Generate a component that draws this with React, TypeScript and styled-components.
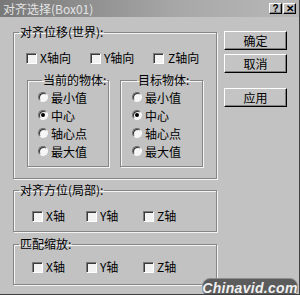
import React from 'react';
import styled, { createGlobalStyle } from 'styled-components';

const Global = createGlobalStyle`
  html, body { margin: 0; padding: 0; background: #c2c2c2; }
  body { font-family: "Noto Sans CJK SC", "Noto Sans", sans-serif; font-size: 12px; color: #000; }
`;

const Window = styled.div`
  position: relative;
  width: 300px;
  height: 295px;
  box-sizing: border-box;
  background: #c2c2c2;
  overflow: hidden;
  display: flex;
  flex-direction: column;
  border-right: 1px solid #404040;
  border-bottom: 1px solid #404040;
`;

const TitleBar = styled.div`
  height: 17px;
  display: flex;
  align-items: center;
  padding: 0 3px;
  background: linear-gradient(to right, #787878, #a8a8a8 60%, #b8b8b8);
  color: #e4e4e4;
  font-size: 12px;
  line-height: 14px;
`;

const Title = styled.span`
  flex: 1;
`;

const TitleBtns = styled.div`
  display: flex;
  gap: 1px;
`;

const TitleBtn = styled.div`
  width: 11px;
  height: 9px;
  background: #c4c4c4;
  border-style: solid;
  border-width: 1px;
  border-color: #fff #000 #000 #fff;
  box-shadow: inset -1px -1px #808080;
  display: flex;
  align-items: center;
  justify-content: center;
  font: bold 10px "Liberation Sans", sans-serif;
  color: #000;
`;

const Body = styled.div`
  display: flex;
  padding: 8px 0 0 13px;
  gap: 7px;
`;

const LeftCol = styled.div`
  width: 204px;
  display: flex;
  flex-direction: column;
`;

const RightCol = styled.div`
  width: 63px;
  display: flex;
  flex-direction: column;
  padding-top: 6px;
`;

const Button = styled.div<{ $mb: number }>`
  height: 19px;
  box-sizing: border-box;
  margin-bottom: ${(p) => p.$mb}px;
  display: flex;
  align-items: center;
  justify-content: center;
  background: #c4c4c4;
  border-style: solid;
  border-width: 1px;
  border-color: #fff #000 #000 #fff;
  box-shadow: inset -1px -1px #808080;
  font-size: 12px;
`;

const Group = styled.fieldset<{ $pt: number; $pb: number; $mt: number }>`
  margin: ${(p) => p.$mt}px 0 0 0;
  padding: ${(p) => p.$pt}px 0 ${(p) => p.$pb}px 0;
  border: 1px solid #868686;
  box-shadow: inset 1px 1px #f4f4f4, 1px 1px #f4f4f4;
  min-inline-size: 0;
  flex: none;
`;

const Legend = styled.legend<{ $ml: number }>`
  margin-left: ${(p) => p.$ml}px;
  padding: 0 1px;
  font-size: 12px;
  line-height: 14px;
  height: 14px;
`;

const CheckRow = styled.div<{ $pl: number; $cols: string }>`
  display: grid;
  grid-template-columns: ${(p) => p.$cols};
  padding-left: ${(p) => p.$pl}px;
  height: 14px;
  align-items: center;
`;

const Item = styled.div<{ $gap: number }>`
  display: flex;
  align-items: center;
  gap: ${(p) => p.$gap}px;
  white-space: nowrap;
  line-height: 14px;
`;

const Box = styled.span`
  width: 11px;
  height: 11px;
  box-sizing: border-box;
  background: #f2f2f2;
  border-style: solid;
  border-width: 1px;
  border-color: #7a7a7a #ffffff #ffffff #7a7a7a;
  box-shadow: inset 1px 1px #3a3a3a;
  flex: none;
`;

const SubRow = styled.div`
  display: flex;
  padding-left: 13px;
  gap: 11px;
  margin-top: 8px;
`;

const SubGroup = styled.fieldset<{ $w: number; $pl: number }>`
  margin: 0;
  width: ${(p) => p.$w}px;
  box-sizing: border-box;
  padding: 1px 0 6px ${(p) => p.$pl}px;
  border: 1px solid #868686;
  box-shadow: inset 1px 1px #f4f4f4, 1px 1px #f4f4f4;
  min-inline-size: 0;
  display: flex;
  flex-direction: column;
`;

const RadioItem = styled.div`
  display: flex;
  align-items: center;
  gap: 3px;
  height: 18px;
  white-space: nowrap;
`;

const Radio = styled.span<{ $on?: boolean }>`
  width: 10px;
  height: 10px;
  border-radius: 50%;
  box-sizing: border-box;
  background: #f6f6f6;
  border: 1px solid;
  border-color: #6a6a6a #f8f8f8 #f8f8f8 #6a6a6a;
  box-shadow: inset 1px 1px #333;
  display: flex;
  align-items: center;
  justify-content: center;
  flex: none;
  &::after {
    content: '';
    width: 4px;
    height: 4px;
    border-radius: 50%;
    background: #000;
    display: ${(p) => (p.$on ? 'block' : 'none')};
  }
`;

const Watermark = styled.div`
  position: absolute;
  left: 202px;
  top: 278px;
  width: 96px;
  height: 19px;
  border-radius: 8px;
  background: #5c5c5c;
  border: 1px solid #8e8e8e;
  box-sizing: border-box;
  color: #f0f0f0;
  font: italic bold 14px "Liberation Sans", sans-serif;
  display: flex;
  align-items: center;
  justify-content: center;
  letter-spacing: 0.3px;
`;

const Check = ({ label, gap = 3 }: { label: string; gap?: number }) => (
  <Item $gap={gap}>
    <Box />
    <span>{label}</span>
  </Item>
);

const RadioList = ({ selected }: { selected: number }) => (
  <>
    {['最小值', '中心', '轴心点', '最大值'].map((t, i) => (
      <RadioItem key={t}>
        <Radio $on={i === selected} />
        <span>{t}</span>
      </RadioItem>
    ))}
  </>
);

export default function App() {
  return (
    <>
      <Global />
      <Window>
        <TitleBar>
          <Title>对齐选择(Box01)</Title>
          <TitleBtns>
            <TitleBtn>?</TitleBtn>
            <TitleBtn>✕</TitleBtn>
          </TitleBtns>
        </TitleBar>
        <Body>
          <LeftCol>
            <Group $mt={0} $pt={12} $pb={11}>
              <Legend $ml={5}>对齐位移(世界):</Legend>
              <CheckRow $pl={12} $cols="64px 63px auto">
                <Check label="X轴向" />
                <Check label="Y轴向" />
                <Check label="Z轴向" gap={4} />
              </CheckRow>
              <SubRow>
                <SubGroup $w={82} $pl={10}>
                  <Legend $ml={4}>当前的物体:</Legend>
                  <RadioList selected={1} />
                </SubGroup>
                <SubGroup $w={83} $pl={11}>
                  <Legend $ml={5}>目标物体:</Legend>
                  <RadioList selected={1} />
                </SubGroup>
              </SubRow>
            </Group>
            <Group $mt={4} $pt={12} $pb={8}>
              <Legend $ml={5}>对齐方位(局部):</Legend>
              <CheckRow $pl={18} $cols="54px 57px auto">
                <Check label="X轴" />
                <Check label="Y轴" />
                <Check label="Z轴" />
              </CheckRow>
            </Group>
            <Group $mt={5} $pt={9} $pb={10}>
              <Legend $ml={5}>匹配缩放:</Legend>
              <CheckRow $pl={18} $cols="54px 57px auto">
                <Check label="X轴" />
                <Check label="Y轴" />
                <Check label="Z轴" />
              </CheckRow>
            </Group>
          </LeftCol>
          <RightCol>
            <Button $mb={4}>确定</Button>
            <Button $mb={15}>取消</Button>
            <Button $mb={0}>应用</Button>
          </RightCol>
        </Body>
        <Watermark>Chinavid.com</Watermark>
      </Window>
    </>
  );
}
